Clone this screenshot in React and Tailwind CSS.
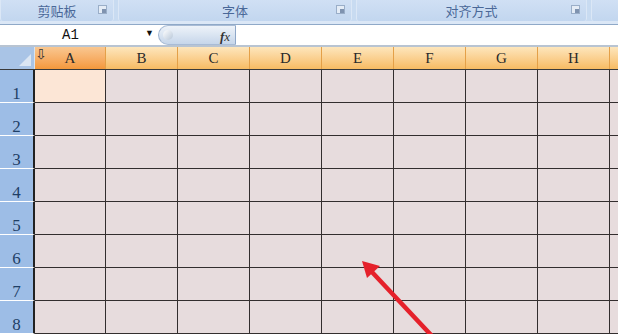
import React from "react";

const cols = ["A", "B", "C", "D", "E", "F", "G", "H", ""];
const rows = [1, 2, 3, 4, 5, 6, 7, 8];

function Launcher() {
  return (
    <div className="w-[9px] h-[9px] border border-[#9aaec8] bg-[#e4ecf6] flex items-end justify-end">
      <div className="w-[4px] h-[4px] bg-[#7f93b0]" />
    </div>
  );
}

function Group({ label, w, launcher = true }) {
  return (
    <div
      className="relative h-full shrink-0 flex items-center justify-center bg-gradient-to-b from-[#d0e0f4] to-[#c2d6ef] border-x border-[#dbe7f6] rounded-b-[3px]"
      style={{ width: w }}
    >
      <span className="text-[13px] font-normal text-[#4a6898]" style={{ fontFamily: '"Noto Sans CJK SC", sans-serif' }}>
        {label}
      </span>
      {launcher && (
        <div className="absolute right-[6px] top-[5px]">
          <Launcher />
        </div>
      )}
    </div>
  );
}

export default function App() {
  return (
    <div className="relative w-[618px] h-[334px] overflow-hidden bg-white" style={{ fontFamily: '"Liberation Serif", serif' }}>
      {/* Ribbon labels */}
      <div className="h-[21px] flex gap-[4px] bg-[#c8dbf1]">
        <Group label="剪贴板" w={114} />
        <Group label="字体" w={234} />
        <Group label="对齐方式" w={231} />
        <Group label="" w={40} launcher={false} />
      </div>
      <div className="h-[3px] bg-[#dbe7f6]" />
      <div className="h-[1px] bg-[#8fa9c8]" />
      {/* Formula bar */}
      <div className="h-[20px] flex items-stretch bg-white">
        <div className="w-[158px] shrink-0 flex items-center relative">
          <span className="absolute left-[62px] text-[14px] text-[#111]" style={{ fontFamily: '"Liberation Mono", monospace' }}>A1</span>
          <span className="absolute left-[145px] top-[2px] text-[9px] text-[#111]">▼</span>
        </div>
        <div className="w-[78px] h-[20px] shrink-0 rounded-l-full border border-r-[#8ea7c8] border-y-[#a9bcd6] border-l-[#9fb4d0] bg-gradient-to-b from-[#eef3f9] to-[#c6d6ea] flex items-center relative">
          <div className="absolute left-[4px] top-[4px] w-[10px] h-[10px] rounded-full bg-gradient-to-br from-[#ffffff] to-[#b7c6d8]" />
          <span className="absolute right-[5px] top-[1px] text-[13px] italic text-[#333]" style={{ fontFamily: '"Liberation Serif", serif' }}>
            <b>f</b>x
          </span>
        </div>
        <div className="flex-1" />
      </div>
      <div className="h-[2px] bg-[#b8c4d2]" />
      {/* Column header */}
      <div className="flex h-[23px] border-b border-[#3a3a3a]">
        <div className="w-[35px] shrink-0 bg-[#a9c4e6] border-r border-[#d6e3f2] relative">
          <div className="absolute right-[3px] bottom-[3px] w-0 h-0 border-l-[12px] border-l-transparent border-b-[12px] border-b-[#dbe6f3]" />
        </div>
        {cols.map((c, i) => (
          <div
            key={i}
            className={
              "shrink-0 relative flex items-center justify-center border-r border-[#e4a048] text-[15px] text-[#2a2a2a] " +
              (i === 0
                ? "w-[71px] bg-gradient-to-b from-[#f9c790] to-[#f4983a]"
                : "w-[72px] bg-gradient-to-b from-[#fde6bc] to-[#f7bb62]")
            }
          >
            {i === 0 && (
              <span className="absolute left-[0px] top-[-3px] text-[14px] text-[#333]" style={{ fontFamily: '"DejaVu Sans", sans-serif' }}>⇩</span>
            )}
            {c}
          </div>
        ))}
      </div>
      {/* Rows */}
      {rows.map((r) => (
        <div key={r} className="flex h-[33px]">
          <div className="w-[35px] shrink-0 bg-[#9dbde6] border-b border-white border-r-2 border-r-[#222] flex items-end justify-center leading-none pb-[0px] text-[17px] text-[#1f3f66]">
            {r}
          </div>
          {cols.map((c, i) => (
            <div
              key={i}
              className={
                "shrink-0 border-b border-r border-[#332e2e] " +
                (i === 0 ? "w-[71px] " : "w-[72px] ") +
                (i === 0 && r === 1 ? "bg-[#fce6d6]" : "bg-[#e7dcdd]")
              }
            />
          ))}
        </div>
      ))}
      {/* Red arrow */}
      <svg className="absolute left-0 top-0 pointer-events-none" width="618" height="334" viewBox="0 0 618 334">
        <line x1="432" y1="336" x2="371" y2="271" stroke="#e5212b" strokeWidth="4.5" />
        <polygon points="362,261 380,266 367,278" fill="#e5212b" />
      </svg>
    </div>
  );
}
